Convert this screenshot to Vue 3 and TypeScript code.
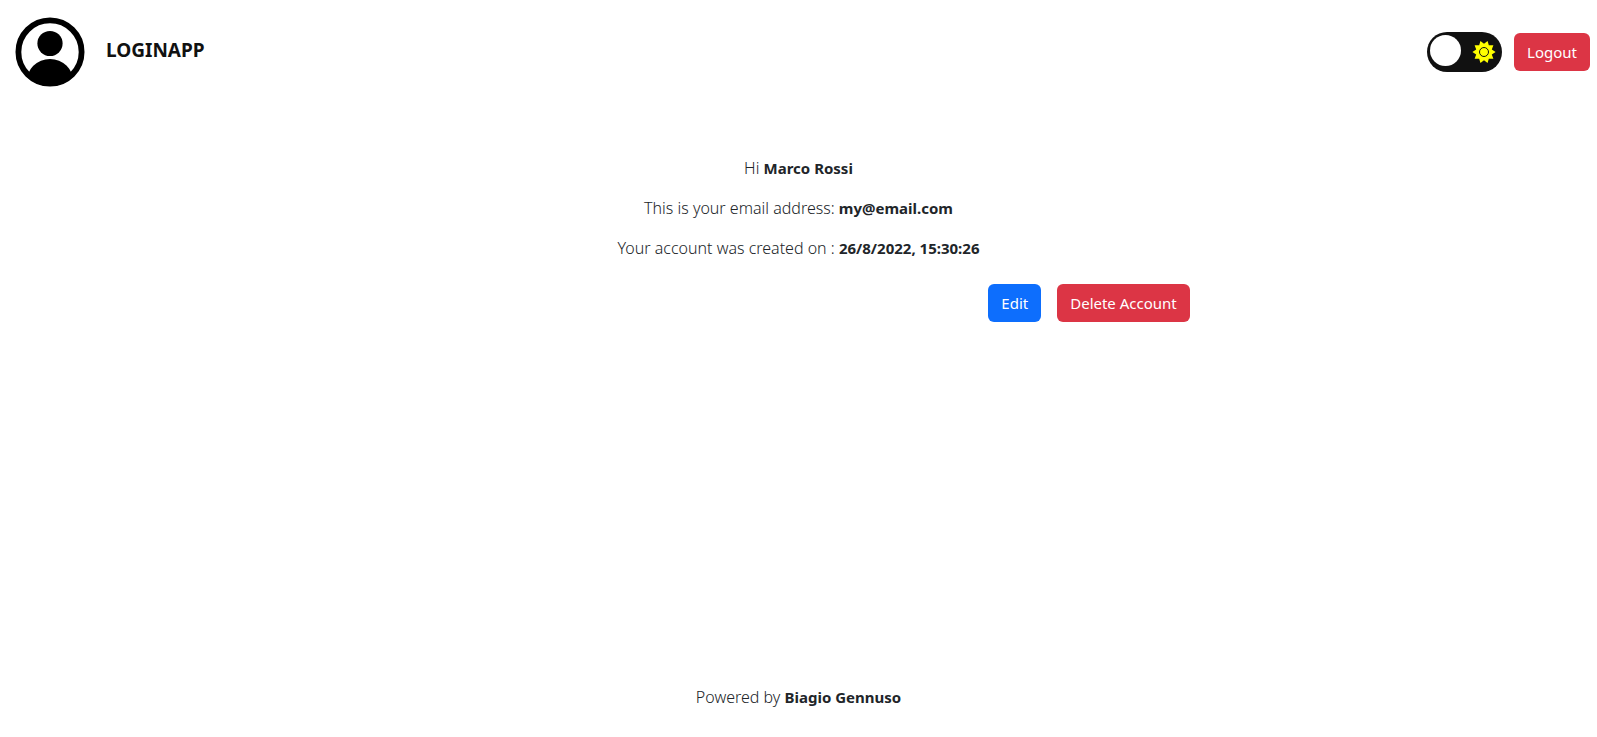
<script setup lang="ts">
import { ref } from 'vue'

const user = { name: 'Marco Rossi', email: 'my@email.com', created: '26/8/2022, 15:30:26' }
const dark = ref(false)

function rays(count: number, cx: number, cy: number, outer: number, inner: number): string {
  return Array.from({ length: count * 2 }, (_, i) => {
    const a = (Math.PI * i) / count - Math.PI / 2
    const r = i % 2 ? outer : inner
    return `${(cx + r * Math.cos(a)).toFixed(2)},${(cy + r * Math.sin(a)).toFixed(2)}`
  }).join(' ')
}
const sun = rays(10, 12, 12, 11.6, 8.2)
</script>

<template>
  <div class="page">
    <header class="bar">
      <a class="brand" href="#">
        <svg class="avatar" viewBox="0 0 70 70" aria-hidden="true">
          <defs><clipPath id="disc"><circle cx="35" cy="35" r="34" /></clipPath></defs>
          <circle cx="35" cy="35" r="31.6" fill="none" stroke="#000" stroke-width="5.8" />
          <circle cx="35" cy="26.5" r="12.6" />
          <circle cx="35" cy="65.5" r="23.6" clip-path="url(#disc)" />
        </svg>
        <span class="title">LOGINAPP</span>
      </a>
      <div class="actions">
        <label class="toggle">
          <input v-model="dark" type="checkbox" role="switch" aria-label="Dark mode" />
          <span class="knob"></span>
          <svg class="sun" viewBox="0 0 24 24" aria-hidden="true">
            <polygon :points="sun" fill="#ff0" />
            <circle cx="12" cy="12" r="4.5" fill="#ff0" stroke="#111" stroke-width="1" />
          </svg>
        </label>
        <button class="btn danger" type="button">Logout</button>
      </div>
    </header>
    <main class="account">
      <p>Hi <strong>{{ user.name }}</strong></p>
      <p>This is your email address: <strong>{{ user.email }}</strong></p>
      <p>Your account was created on : <strong>{{ user.created }}</strong></p>
      <div class="buttons">
        <button class="btn primary" type="button">Edit</button>
        <button class="btn danger" type="button">Delete Account</button>
      </div>
    </main>
    <footer class="footer">Powered by <strong>Biagio Gennuso</strong></footer>
  </div>
</template>

<style>
body {
  margin: 0;
  background: #fff;
}
</style>

<style scoped>
.page {
  box-sizing: border-box;
  min-height: 100vh;
  display: flex;
  flex-direction: column;
  color: #212529;
  font: 300 16px/24px "Noto Sans", "Open Sans", sans-serif;
}
.bar {
  display: flex;
  align-items: center;
  justify-content: space-between;
  padding: 17px 7px 16px 15px;
}
.brand {
  display: flex;
  align-items: center;
  gap: 21px;
  color: #111;
  text-decoration: none;
}
.avatar {
  width: 70px;
  height: 70px;
}
.title {
  padding-bottom: 4px;
  font-size: 19px;
  font-weight: 700;
}
.actions {
  display: flex;
  align-items: center;
  gap: 12px;
}
.toggle {
  box-sizing: border-box;
  width: 75px;
  height: 40px;
  padding: 0 6px 0 3px;
  display: flex;
  align-items: center;
  justify-content: space-between;
  border-radius: 20px;
  background: #111;
  cursor: pointer;
}
.toggle input {
  position: absolute;
  opacity: 0;
}
.knob {
  width: 31px;
  height: 31px;
  margin-bottom: 3px;
  border-radius: 50%;
  background: #fff;
}
.sun {
  width: 24px;
  height: 24px;
}
.btn {
  padding: 6px 12px;
  border: 1px solid transparent;
  border-radius: 6px;
  color: #fff;
  font: 400 15px/24px "Noto Sans", "Open Sans", sans-serif;
  cursor: pointer;
}
.primary {
  background: #0d6efd;
}
.danger {
  background: #dc3545;
}
.account {
  width: 50%;
  margin: 53px auto 0;
  text-align: center;
}
p {
  margin: 0 0 16px;
}
strong {
  font-size: 15px;
  line-height: 20px;
  font-weight: 700;
}
.buttons {
  display: flex;
  justify-content: flex-end;
  gap: 16px;
  margin-top: 24px;
  padding-right: 8px;
}
.footer {
  margin-top: auto;
  padding-bottom: 28px;
  text-align: center;
}
</style>
